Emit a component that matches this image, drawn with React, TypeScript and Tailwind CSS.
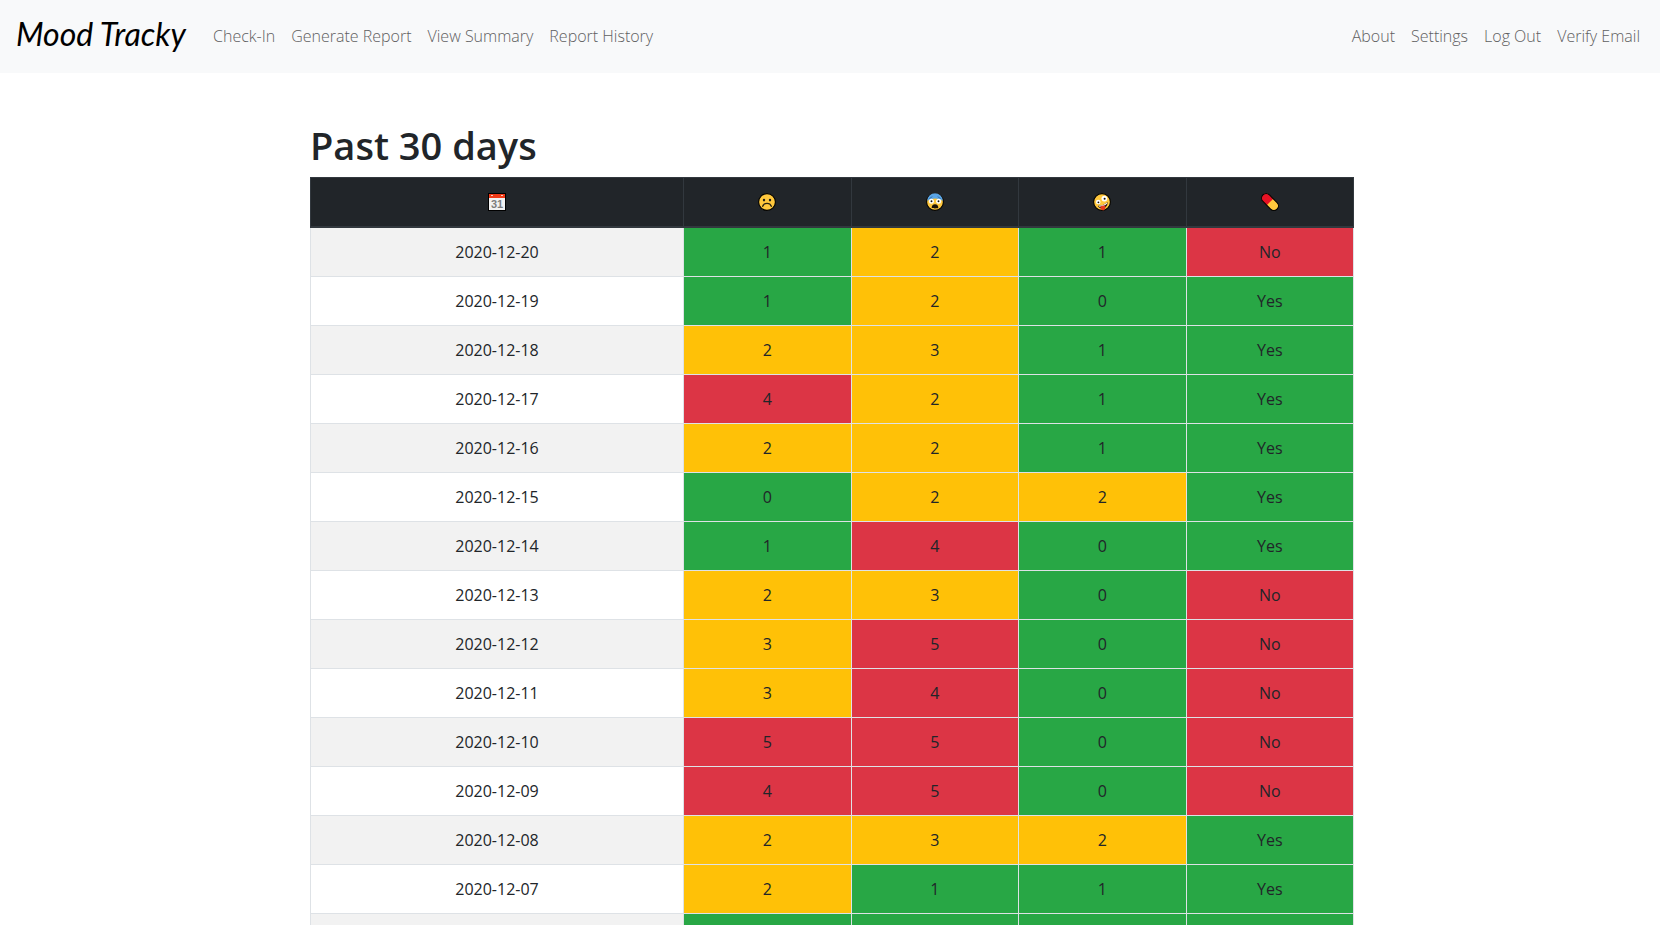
import type { ReactNode } from "react";

type Tone = "good" | "fair" | "poor";

const toneClass: Record<Tone, string> = {
  good: "bg-[#28a745]",
  fair: "bg-[#ffc107]",
  poor: "bg-[#dc3545]",
};

interface Entry {
  date: string;
  scores: [number, number, number];
  medicated: boolean;
}

const entries: Entry[] = [
  { date: "2020-12-20", scores: [1, 2, 1], medicated: false },
  { date: "2020-12-19", scores: [1, 2, 0], medicated: true },
  { date: "2020-12-18", scores: [2, 3, 1], medicated: true },
  { date: "2020-12-17", scores: [4, 2, 1], medicated: true },
  { date: "2020-12-16", scores: [2, 2, 1], medicated: true },
  { date: "2020-12-15", scores: [0, 2, 2], medicated: true },
  { date: "2020-12-14", scores: [1, 4, 0], medicated: true },
  { date: "2020-12-13", scores: [2, 3, 0], medicated: false },
  { date: "2020-12-12", scores: [3, 5, 0], medicated: false },
  { date: "2020-12-11", scores: [3, 4, 0], medicated: false },
  { date: "2020-12-10", scores: [5, 5, 0], medicated: false },
  { date: "2020-12-09", scores: [4, 5, 0], medicated: false },
  { date: "2020-12-08", scores: [2, 3, 2], medicated: true },
  { date: "2020-12-07", scores: [2, 1, 1], medicated: true },
  { date: "2020-12-06", scores: [1, 1, 1], medicated: true },
];

function toneOf(score: number): Tone {
  if (score <= 1) return "good";
  return score <= 3 ? "fair" : "poor";
}

function Icon({ label, children }: { label: string; children: ReactNode }) {
  return (
    <svg role="img" aria-label={label} viewBox="0 0 18 18" className="mx-auto block size-[18px]">
      {children}
    </svg>
  );
}

function CalendarIcon() {
  return (
    <Icon label="Date">
      <rect width="18" height="18" fill="#000" />
      <rect x="1" y="1" width="16" height="16" fill="#f2f2f2" />
      <rect x="1" y="1" width="16" height="4" fill="#f03a17" />
      <rect x="3" y="2" width="2" height="1" fill="#ffc9bd" />
      <rect x="13" y="2" width="2" height="1" fill="#ffc9bd" />
      <text x="9" y="15" textAnchor="middle" fontFamily="Liberation Sans, sans-serif" fontWeight="700" fontSize="11" fill="#7d7d7d">
        31
      </text>
    </Icon>
  );
}

function SadIcon() {
  return (
    <Icon label="Depression">
      <circle cx="9" cy="9" r="8.4" fill="#ffc83d" stroke="#000" strokeWidth="1.1" />
      <ellipse cx="6" cy="7.1" rx="1.2" ry="1.4" fill="#1c1c1c" />
      <ellipse cx="12" cy="7.1" rx="1.2" ry="1.4" fill="#1c1c1c" />
      <path d="M4.7 13.3C5.5 10.9 7 10.4 9 10.4s3.5.5 4.3 2.9" fill="none" stroke="#2b2412" strokeWidth="1.3" strokeLinecap="round" />
    </Icon>
  );
}

function FearIcon() {
  return (
    <Icon label="Anxiety">
      <circle cx="9" cy="9" r="8.4" fill="#ffc83d" stroke="#000" strokeWidth="1.1" />
      <path d="M1.2 8A7.8 7.8 0 0 1 16.8 8C15.2 6.3 12 5.4 9 5.4S2.8 6.3 1.2 8Z" fill="#5aa5e6" />
      <path d="M3.6 5.4 6 3.9M14.4 5.4 12 3.9" stroke="#2c6ca8" strokeWidth="0.9" strokeLinecap="round" />
      <circle cx="5.4" cy="8.2" r="2.5" fill="#fff" />
      <circle cx="12.6" cy="8.2" r="2.5" fill="#fff" />
      <circle cx="5.5" cy="8.3" r="0.95" fill="#111" />
      <circle cx="12.5" cy="8.3" r="0.95" fill="#111" />
      <path d="M5.7 15c0-2.4 1.1-3.7 3.3-3.7s3.3 1.3 3.3 3.7c-.7.5-5.9.5-6.6 0Z" fill="#1c1208" />
    </Icon>
  );
}

function ZanyIcon() {
  return (
    <Icon label="Mania">
      <circle cx="9" cy="9" r="8.4" fill="#ffc83d" stroke="#000" strokeWidth="1.1" />
      <circle cx="5.2" cy="9" r="2.3" fill="#fff" />
      <circle cx="11.4" cy="5.6" r="2.9" fill="#fff" />
      <circle cx="5.4" cy="9.3" r="0.9" fill="#111" />
      <circle cx="11.6" cy="5.8" r="1" fill="#111" />
      <path d="M4.9 12.7C8.5 13 12 11.6 14.5 9c.5 2.6-1 5.3-4 6.2-2.5.7-4.7-.2-5.6-2.5Z" fill="#2a1610" />
      <path d="M5.6 12.8c3.1.1 6.2-1.2 8.5-3.3l.1 1.1c-2.3 2.1-5 3.2-8 3.2Z" fill="#fff" />
      <path d="M7.3 13.7c1.5-1.2 3.6-1.5 4.9-1 .5 2 0 4-1.5 4.5-1.8.5-3.3-.8-3.4-3.5Z" fill="#e8391c" />
    </Icon>
  );
}

function PillIcon() {
  return (
    <Icon label="Medication">
      <g transform="rotate(45 9 9)">
        <rect x="-1" y="4.4" width="20" height="9.2" rx="4.6" fill="#ffc83d" />
        <path d="M9 4.4H3.6a4.6 4.6 0 0 0 0 9.2H9Z" fill="#e81224" />
        <rect x="-1" y="4.4" width="20" height="9.2" rx="4.6" fill="none" stroke="#000" strokeWidth="1.1" />
      </g>
    </Icon>
  );
}

const columns = [
  { key: "date", icon: <CalendarIcon /> },
  { key: "depression", icon: <SadIcon /> },
  { key: "anxiety", icon: <FearIcon /> },
  { key: "mania", icon: <ZanyIcon /> },
  { key: "medication", icon: <PillIcon /> },
];

function NavLinks({ items }: { items: string[] }) {
  return (
    <ul className="flex gap-4">
      {items.map((item) => (
        <li key={item}>
          <a href="#" className="block whitespace-nowrap text-base leading-6 font-light text-[#5f6061]">
            {item}
          </a>
        </li>
      ))}
    </ul>
  );
}

export default function App() {
  return (
    <div className="bg-white font-['Segoe_UI','Open_Sans',sans-serif] text-[#212529]">
      <nav className="flex h-[73px] items-center bg-[#f8f9fa] pr-5 pb-px pl-4">
        <a
          href="#"
          className="w-[197px] shrink-0 whitespace-nowrap pb-1 font-['Brush_Script_MT','Lato',cursive] text-[32px] leading-10 text-black italic"
        >
          Mood Tracky
        </a>
        <div className="flex grow items-center justify-between">
          <NavLinks items={["Check-In", "Generate Report", "View Summary", "Report History"]} />
          <NavLinks items={["About", "Settings", "Log Out", "Verify Email"]} />
        </div>
      </nav>

      <main className="pt-12 pl-1">
        <div className="mx-auto max-w-[1044px]">
          <h1 className="mb-2 text-[38px] leading-[48px] font-semibold">Past 30 days</h1>
          <table className="w-full table-fixed border-collapse text-center leading-6">
            <thead className="bg-[#212529]">
              <tr>
                {columns.map(({ key, icon }) => (
                  <th
                    key={key}
                    scope="col"
                    className="h-[49px] border border-b-2 border-[#32383e] p-3 first:w-[373px]"
                  >
                    {icon}
                  </th>
                ))}
              </tr>
            </thead>
            <tbody>
              {entries.map(({ date, scores, medicated }) => (
                <tr key={date} className="odd:bg-[#f2f2f2]">
                  <td className="border border-[#dee2e6] p-3">{date}</td>
                  {scores.map((score, i) => (
                    <td key={i} className={`border border-[#dee2e6] p-3 ${toneClass[toneOf(score)]}`}>
                      {score}
                    </td>
                  ))}
                  <td className={`border border-[#dee2e6] p-3 ${toneClass[medicated ? "good" : "poor"]}`}>
                    {medicated ? "Yes" : "No"}
                  </td>
                </tr>
              ))}
            </tbody>
          </table>
        </div>
      </main>
    </div>
  );
}
